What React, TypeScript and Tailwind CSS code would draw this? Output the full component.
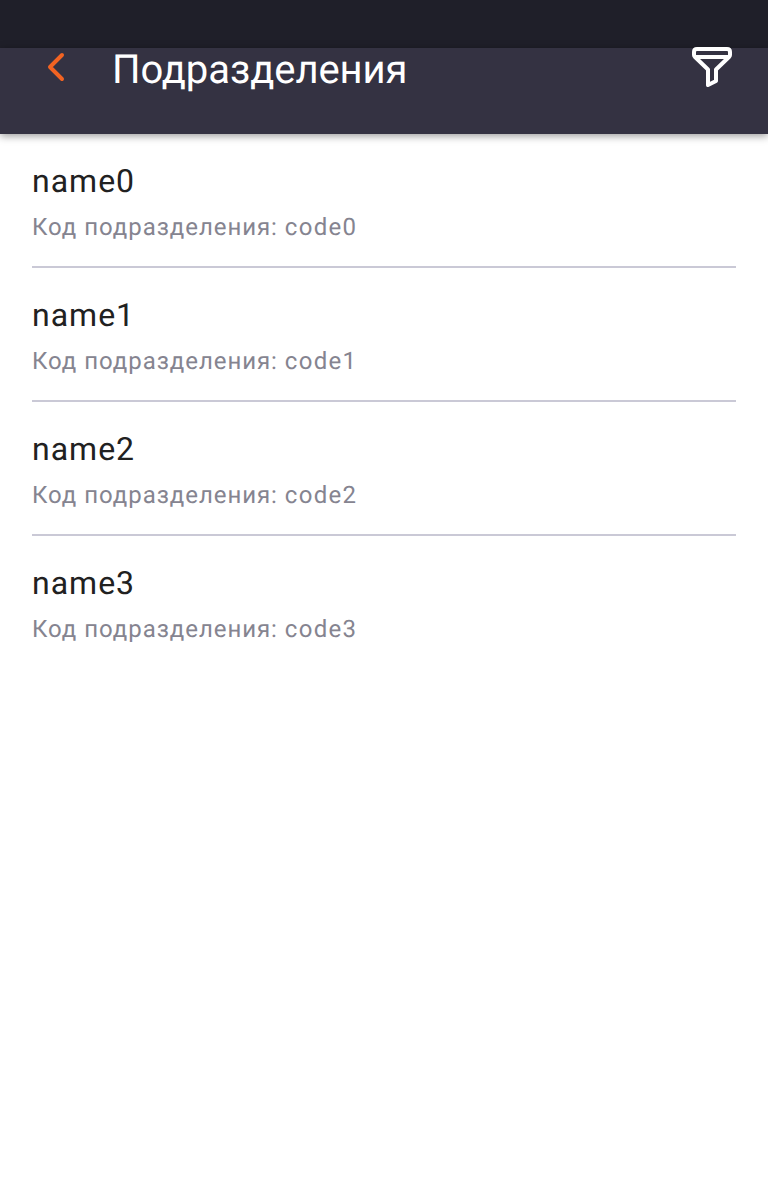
const items = [0, 1, 2, 3];

export default function App() {
  return (
    <div className="flex h-[1184px] w-[768px] flex-col bg-white font-['Roboto',sans-serif] antialiased [text-rendering:geometricPrecision]">
      <div className="h-12 shrink-0 bg-[#1f1f29]" />
      <header className="flex h-[86px] shrink-0 items-start bg-[#343242] shadow-[0_2px_8px_rgba(0,0,0,0.4)]">
        <svg className="-mt-1 ml-8 h-12 w-12" viewBox="0 0 48 48" fill="none" stroke="#f26322" strokeWidth="4" strokeLinecap="round" strokeLinejoin="round">
          <path d="M30 11 L18 23 L30 35" />
        </svg>
        <h1 className="ml-8 flex-1 text-[40px] leading-[44px] tracking-[-0.07px] text-white">Подразделения</h1>
        <svg className="-mt-1 mr-8 h-12 w-12" viewBox="0 0 48 48" fill="none" stroke="white" strokeWidth="4" strokeLinejoin="round">
          <path d="M9 5H39Q42 5 42 8V11Q42 12 41 13L28 25.5V37L20 41V25.5L7 13Q6 12 6 11V8Q6 5 9 5ZM7 13H41" />
        </svg>
      </header>
      <main className="px-8">
        {items.map((n) => (
          <section key={n} className="flex h-[134px] flex-col border-b-2 border-[#cac9d6] pt-6 last:border-b-0">
            <h2 className="text-[32px] leading-[46px] tracking-[1px] text-[#212121]">name{n}</h2>
            <p className="text-[24px] leading-[46px] tracking-[0.95px] text-[#858490]">
              Код подразделения: <span className="tracking-[1.3px]">code{n}</span>
            </p>
          </section>
        ))}
      </main>
    </div>
  );
}
